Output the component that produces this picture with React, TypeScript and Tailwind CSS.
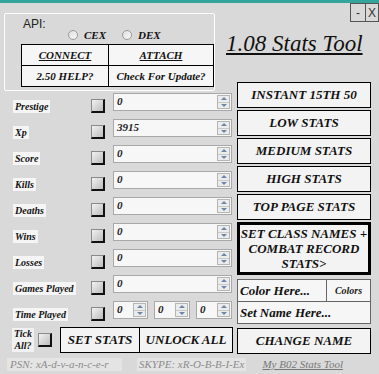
import React from 'react';

const serif = "font-['Liberation_Serif',serif]";

function Spinner() {
  return (
    <div className="flex flex-col w-[13px] h-[14px] border border-[#b5b5b5] bg-[#ececec]">
      <div className="flex-1 flex items-center justify-center border-b border-[#c8c8c8]">
        <div className="w-0 h-0 border-l-[3px] border-r-[3px] border-b-[3px] border-l-transparent border-r-transparent border-b-[#6a86a8]" />
      </div>
      <div className="flex-1 flex items-center justify-center">
        <div className="w-0 h-0 border-l-[3px] border-r-[3px] border-t-[3px] border-l-transparent border-r-transparent border-t-[#6a86a8]" />
      </div>
    </div>
  );
}

function NumBox({ value, width }: { value: string; width: string }) {
  return (
    <div className={`${width} h-[18px] flex items-start justify-between border border-[#a8a8a8] bg-[#f7f7f7] pl-[3px] pr-[1px] pt-[1px]`}>
      <span className={`${serif} italic font-bold text-[11px] leading-[12px] text-[#222]`}>{value}</span>
      <Spinner />
    </div>
  );
}

function CheckBox() {
  return (
    <div className="w-[14px] h-[14px] border border-[#8a8a8a] border-r-2 border-b-2 border-r-[#111] border-b-[#111] bg-gradient-to-br from-[#f2f2f2] to-[#bdbdbd]" />
  );
}

function StatRow({ label, value }: { label: string; value?: string }) {
  return (
    <div className="flex items-start h-[26px]">
      <div className="w-[91px] pl-[13px] pt-[7px] flex">
        <span className={`${serif} italic font-bold text-[10px] leading-[13px] text-[#111] bg-[#f5f5f5] px-[2px]`}>{label}</span>
      </div>
      <div className="mt-[6px] mr-[8px]">
        <CheckBox />
      </div>
      {value !== undefined ? (
        <NumBox value={value} width="w-[119px]" />
      ) : (
        <div className="flex gap-[6px]">
          <NumBox value="0" width="w-[35px]" />
          <NumBox value="0" width="w-[36px]" />
          <NumBox value="0" width="w-[36px]" />
        </div>
      )}
    </div>
  );
}

function BigButton({ children, className = '' }: { children: React.ReactNode; className?: string }) {
  return (
    <div className={`flex items-center justify-center border border-black bg-[#f3f3f3] ${serif} italic font-bold text-[13px] text-[#111] ${className}`}>
      {children}
    </div>
  );
}

export default function App() {
  const stats: [string, string | undefined][] = [
    ['Prestige', '0'],
    ['Xp', '3915'],
    ['Score', '0'],
    ['Kills', '0'],
    ['Deaths', '0'],
    ['Wins', '0'],
    ['Losses', '0'],
    ['Games Played', '0'],
    ['Time Played', undefined],
  ];

  return (
    <div className="relative w-[379px] h-[374px] bg-[#d9d9d9] border-t-[3px] border-[#35a59b] overflow-hidden">
      {/* window buttons */}
      <div className="absolute top-0 right-0 flex">
        <div className="w-[15px] h-[19px] flex items-center justify-center border border-[#555] border-r-0 text-[12px] text-[#333] font-['Liberation_Sans',sans-serif]">-</div>
        <div className="w-[14px] h-[19px] flex items-center justify-center border border-[#555] text-[12px] text-[#333] font-['Liberation_Sans',sans-serif]">X</div>
      </div>

      {/* top */}
      <div className="flex h-[79px]">
        <div className="relative ml-[4px] mt-[10px] w-[211px] h-[78px] border border-white rounded-[2px]">
          <div className="absolute left-[18px] top-[4px] text-[12px] leading-[12px] text-[#222] font-['Liberation_Sans',sans-serif]">API:</div>
          <div className="flex items-center gap-[6px] ml-[63px] mt-[15px] h-[12px]">
            <div className="w-[10px] h-[10px] rounded-full border border-[#9a9a9a] bg-gradient-to-br from-[#e0e0e0] to-[#f8f8f8]" />
            <span className={`${serif} italic font-bold text-[11px] text-[#111] mr-[10px]`}>CEX</span>
            <div className="w-[10px] h-[10px] rounded-full border border-[#9a9a9a] bg-gradient-to-br from-[#e0e0e0] to-[#f8f8f8]" />
            <span className={`${serif} italic font-bold text-[11px] text-[#111]`}>DEX</span>
          </div>
          <div className={`ml-[16px] mt-[3px] w-[193px] border border-black bg-[#f6f6f6] ${serif} italic font-bold text-[11px] text-[#111]`}>
            <div className="flex h-[21px] border-b border-black">
              <div className="w-[87px] flex items-center justify-center border-r border-black underline">CONNECT</div>
              <div className="flex-1 flex items-center justify-center underline">ATTACH</div>
            </div>
            <div className="flex h-[20px]">
              <div className="w-[87px] flex items-center justify-center border-r border-black">2.50 HELP?</div>
              <div className="flex-1 flex items-center justify-center">Check For Update?</div>
            </div>
          </div>
        </div>
        <div className={`ml-[11px] mt-[29px] ${serif} italic text-[23px] leading-[24px] underline text-[#111]`}>1.08 Stats Tool</div>
      </div>

      {/* main */}
      <div className="flex">
        <div className="w-[237px] pt-[11px]">
          {stats.map(([label, value]) => (
            <StatRow key={label} label={label} value={value} />
          ))}
          <div className="flex items-start h-[26px]">
            <div className={`ml-[12px] mt-[1px] w-[22px] text-center ${serif} italic font-bold text-[10px] leading-[12px] text-[#111] bg-[#f1f1f1]`}>
              Tick<br />All?
            </div>
            <div className="ml-[4px] mt-[6px]">
              <CheckBox />
            </div>
            <div className="ml-[8px] flex border border-black bg-[#f3f3f3] h-[26px]">
              <div className={`w-[79px] flex items-center justify-center border-r border-black ${serif} italic font-bold text-[13px] text-[#111]`}>SET STATS</div>
              <div className={`w-[92px] flex items-center justify-center ${serif} italic font-bold text-[13px] text-[#111]`}>UNLOCK ALL</div>
            </div>
          </div>
        </div>

        <div className="w-[134px] flex flex-col">
          <div className="flex flex-col gap-[2px]">
            <BigButton className="h-[26px]">INSTANT 15TH 50</BigButton>
            <BigButton className="h-[26px]">LOW STATS</BigButton>
            <BigButton className="h-[26px]">MEDIUM STATS</BigButton>
            <BigButton className="h-[26px]">HIGH STATS</BigButton>
            <BigButton className="h-[26px]">TOP PAGE STATS</BigButton>
          </div>
          <div className={`mt-[2px] h-[53px] flex items-center justify-center text-center border-[3px] border-black bg-[#f3f3f3] ${serif} italic font-bold text-[13px] leading-[15px] text-[#111]`}>
            SET CLASS NAMES +<br />COMBAT RECORD<br />STATS&gt;
          </div>
          <div className="mt-[4px] border border-[#666] bg-[#f6f6f6]">
            <div className="flex h-[22px] border-b border-[#666]">
              <div className={`flex-1 flex items-center pl-[2px] ${serif} italic font-bold text-[13px] text-[#111]`}>Color Here...</div>
              <div className={`w-[44px] flex items-center justify-center border-l border-[#666] ${serif} italic font-bold text-[10px] text-[#222]`}>Colors</div>
            </div>
            <div className={`h-[21px] flex items-center pl-[2px] ${serif} italic font-bold text-[13px] text-[#111]`}>Set Name Here...</div>
          </div>
          <BigButton className="mt-[4px] h-[26px]">CHANGE NAME</BigButton>
        </div>
      </div>

      {/* footer */}
      <div className={`flex items-center mt-[4px] ${serif} italic text-[11px] leading-[13px] text-[#8c8c8c]`}>
        <span className="ml-[7px] w-[115px] bg-[#e4e4e4] pl-[3px]">PSN: xA-d-v-a-n-c-e-r</span>
        <span className="ml-[15px] bg-[#e4e4e4] px-[2px]">SKYPE: xR-O-B-B-I-Ex</span>
        <span className="ml-[16px] underline text-[#777]">My B02 Stats Tool</span>
      </div>
    </div>
  );
}
